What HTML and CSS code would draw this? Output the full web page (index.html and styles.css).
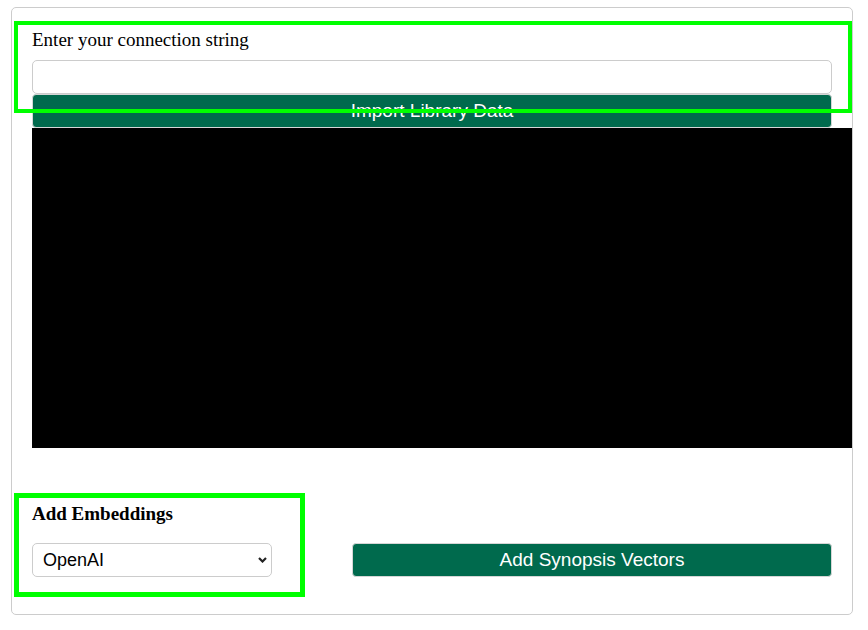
FILE: index.html
```html
<!DOCTYPE html>
<html>
<head>
<meta charset="utf-8">
<link rel="stylesheet" href="styles.css">
</head>
<body>
<div class="page">
  <div class="card">
    <label class="conn-label" for="conn">Enter your connection string</label>
    <input class="conn-input" id="conn" type="text">
    <button class="btn btn-import">Import Library Data</button>
    <div class="canvas"></div>
    <div class="bottom-row">
      <div class="embed-col">
        <div class="embed-title">Add Embeddings</div>
        <div class="select-wrap">
          <select class="embed-select">
            <option>OpenAI</option>
          </select>
          <svg class="chevron" width="9" height="6" viewBox="0 0 9 6"><polyline points="1,1 4.5,4.5 8,1" fill="none" stroke="#222" stroke-width="2.2"/></svg>
        </div>
      </div>
      <button class="btn btn-vectors">Add Synopsis Vectors</button>
    </div>
    <div class="highlight highlight-top"></div>
    <div class="highlight highlight-bottom"></div>
  </div>
</div>
</body>
</html>
```

FILE: styles.css
```css
html, body {
  margin: 0;
  padding: 0;
  background: #ffffff;
}

.page {
  padding: 7px 0 0 11px;
}

.card {
  position: relative;
  box-sizing: border-box;
  width: 842px;
  height: 608px;
  border: 1px solid #cccccc;
  border-radius: 5px;
  padding: 21px 20px 0 20px;
  font-family: "Liberation Serif", "Times New Roman", serif;
  color: #000;
}

.conn-label {
  display: block;
  font-size: 19px;
  line-height: 21px;
  margin-bottom: 10px;
}

.conn-input {
  display: block;
  box-sizing: border-box;
  width: 800px;
  height: 34px;
  margin: 0;
  border: 1px solid #cccccc;
  border-radius: 5px;
  background: #fff;
  outline: none;
}

.btn {
  display: block;
  box-sizing: border-box;
  height: 34px;
  margin: 0;
  padding: 0;
  border: 1px solid #d6d6d6;
  border-radius: 4px;
  background: #006a4d;
  color: #ffffff;
  font-family: "Liberation Sans", Arial, sans-serif;
  font-size: 19px;
  line-height: 32px;
  text-align: center;
}

.btn-import {
  width: 800px;
}

.canvas {
  width: 820px;
  height: 320px;
  background: #000000;
}

.bottom-row {
  display: grid;
  grid-template-columns: 240px 480px;
  column-gap: 80px;
  align-items: end;
  margin-top: 55px;
}

.embed-title {
  font-weight: bold;
  font-size: 19px;
  line-height: 21px;
  margin-bottom: 19px;
}

.select-wrap {
  position: relative;
  width: 240px;
  height: 34px;
}

.embed-select {
  appearance: none;
  -webkit-appearance: none;
  box-sizing: border-box;
  width: 240px;
  height: 34px;
  margin: 0;
  padding: 0 0 0 10px;
  border: 1px solid #cccccc;
  border-radius: 5px;
  background: #ffffff;
  color: #000;
  font-family: "Liberation Sans", Arial, sans-serif;
  font-size: 18px;
}

.chevron {
  position: absolute;
  right: 5px;
  top: 14px;
  pointer-events: none;
}

.btn-vectors {
  width: 480px;
}

.highlight {
  position: absolute;
  box-sizing: border-box;
  border: 4px solid #00ff00;
  pointer-events: none;
}

.highlight-top {
  left: 2px;
  top: 13px;
  width: 838px;
  height: 92px;
}

.highlight-bottom {
  left: 2px;
  top: 485px;
  width: 291px;
  height: 104px;
  border-width: 5px;
}
```
